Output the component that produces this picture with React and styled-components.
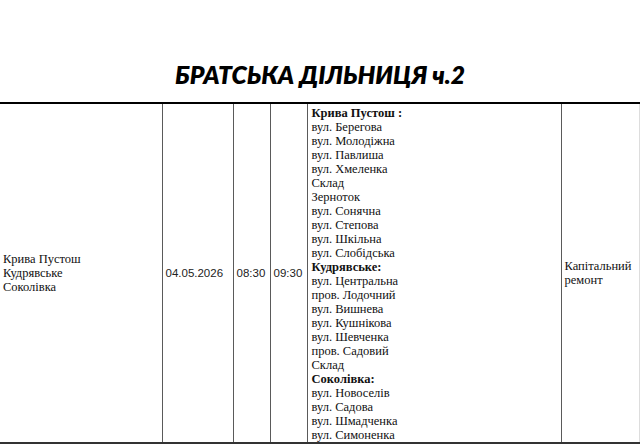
import React from "react";
import styled, { createGlobalStyle } from "styled-components";

const GlobalStyle = createGlobalStyle`
  html, body {
    margin: 0;
    padding: 0;
    background: #ffffff;
  }
  body {
    font-family: "Liberation Serif", "Times New Roman", serif;
    color: #111;
  }
`;

const Page = styled.div`
  width: 640px;
  height: 446px;
  overflow: hidden;
  background: #fff;
`;

const Header = styled.div`
  height: 102px;
  display: flex;
  align-items: flex-end;
  justify-content: center;
  box-sizing: border-box;
  padding-bottom: 12px;
`;

const Title = styled.h1`
  margin: 0;
  font-family: Lato, "Open Sans", sans-serif;
  font-weight: 800;
  font-style: italic;
  font-size: 24.6px;
  line-height: 30px;
  color: #000;
`;

const Table = styled.table`
  border-collapse: collapse;
  table-layout: fixed;
  width: 639px;
`;

const Col = styled.col`
  width: ${(p) => p.$w}px;
`;

const Cell = styled.td`
  border-left: 1px solid #5a5a5a;
  border-right: 1px solid #5a5a5a;
  border-top: 2px solid #000;
  border-bottom: 2px solid #333;
  vertical-align: ${(p) => (p.$top ? "top" : "middle")};
  padding: ${(p) => (p.$top ? "2px 2px 0 4px" : "0 2px 0 3px")};
  font-family: ${(p) =>
    p.$sans
      ? '"Liberation Sans", Arial, sans-serif'
      : '"Liberation Serif", "Times New Roman", serif'};
  font-size: ${(p) => (p.$sans ? "11.5px" : "12.5px")};
  line-height: 14px;
  color: ${(p) => (p.$sans ? "#222" : "#111")};
  text-align: left;
  overflow: hidden;
  &:first-child {
    border-left: none;
  }
  &:last-child {
    border-right: 1px solid #ddd;
  }
`;

const Line = styled.div`
  font-weight: ${(p) => (p.$bold ? 700 : 400)};
  white-space: nowrap;
`;

const streets = [
  { t: "Крива Пустош :", b: true },
  { t: "вул. Берегова" },
  { t: "вул. Молодіжна" },
  { t: "вул. Павлиша" },
  { t: "вул. Хмеленка" },
  { t: "Склад" },
  { t: "Зерноток" },
  { t: "вул. Сонячна" },
  { t: "вул. Степова" },
  { t: "вул. Шкільна" },
  { t: "вул. Слобідська" },
  { t: "Кудрявське:", b: true },
  { t: "вул. Центральна" },
  { t: "пров. Лодочний" },
  { t: "вул. Вишнева" },
  { t: "вул. Кушнікова" },
  { t: "вул. Шевченка" },
  { t: "пров. Садовий" },
  { t: "Склад" },
  { t: "Соколівка:", b: true },
  { t: "вул. Новоселів" },
  { t: "вул. Садова" },
  { t: "вул. Шмадченка" },
  { t: "вул. Симоненка" },
];

const villages = ["Крива Пустош", "Кудрявське", "Соколівка"];
const widths = [162, 71, 37, 37, 254, 78];

export default function App() {
  return (
    <>
      <GlobalStyle />
      <Page>
        <Header>
          <Title>БРАТСЬКА ДІЛЬНИЦЯ ч.2</Title>
        </Header>
        <Table>
          <colgroup>
            {widths.map((w, i) => (
              <Col key={i} $w={w} />
            ))}
          </colgroup>
          <tbody>
            <tr>
              <Cell>
                {villages.map((v) => (
                  <Line key={v}>{v}</Line>
                ))}
              </Cell>
              <Cell $sans>04.05.2026</Cell>
              <Cell $sans>08:30</Cell>
              <Cell $sans>09:30</Cell>
              <Cell $top>
                {streets.map((s, i) => (
                  <Line key={i} $bold={s.b}>
                    {s.t}
                  </Line>
                ))}
              </Cell>
              <Cell>
                <Line>Капітальний</Line>
                <Line>ремонт</Line>
              </Cell>
            </tr>
          </tbody>
        </Table>
      </Page>
    </>
  );
}
